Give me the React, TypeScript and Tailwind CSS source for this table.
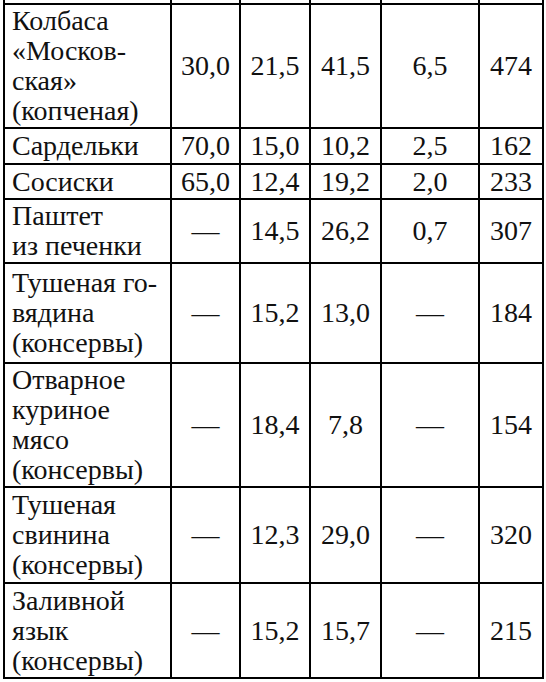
const rows: { name: string[]; vals: string[] }[] = [
  { name: ['Колбаса', '«Москов-', 'ская»', '(копченая)'], vals: ['30,0', '21,5', '41,5', '6,5', '474'] },
  { name: ['Сардельки'], vals: ['70,0', '15,0', '10,2', '2,5', '162'] },
  { name: ['Сосиски'], vals: ['65,0', '12,4', '19,2', '2,0', '233'] },
  { name: ['Паштет', 'из печенки'], vals: ['—', '14,5', '26,2', '0,7', '307'] },
  { name: ['Тушеная го-', 'вядина', '(консервы)'], vals: ['—', '15,2', '13,0', '—', '184'] },
  { name: ['Отварное', 'куриное', 'мясо', '(консервы)'], vals: ['—', '18,4', '7,8', '—', '154'] },
  { name: ['Тушеная', 'свинина', '(консервы)'], vals: ['—', '12,3', '29,0', '—', '320'] },
  { name: ['Заливной', 'язык', '(консервы)'], vals: ['—', '15,2', '15,7', '—', '215'] },
]

const txt = "font-['Liberation_Serif',serif] text-[28px] leading-[30px] text-[#111]"

export default function App() {
  return (
    <div className="w-[546px] h-[682px] overflow-hidden bg-white pl-[3px]">
      <div className="grid w-[541px] grid-cols-[165px_67px_68px_69px_96px_62px] grid-rows-[3px_122px_34px_33px_62px_98px_122px_94px_93px] gap-[2px] bg-black px-[2px] pb-[2px]">
        {Array.from({ length: 6 }).map((_, i) => (
          <div key={`top-${i}`} className="bg-white" />
        ))}
        {rows.map((r, ri) => [
          <div key={`n-${ri}`} className="flex flex-col justify-center bg-white pl-[7px]">
            {r.name.map((line, i) => (
              <div key={i} className={`${txt} whitespace-nowrap`}>
                {line}
              </div>
            ))}
          </div>,
          ...r.vals.map((v, i) => (
            <div key={`v-${ri}-${i}`} className="flex items-center justify-center bg-white">
              <div className={txt}>{v}</div>
            </div>
          )),
        ])}
      </div>
    </div>
  )
}
